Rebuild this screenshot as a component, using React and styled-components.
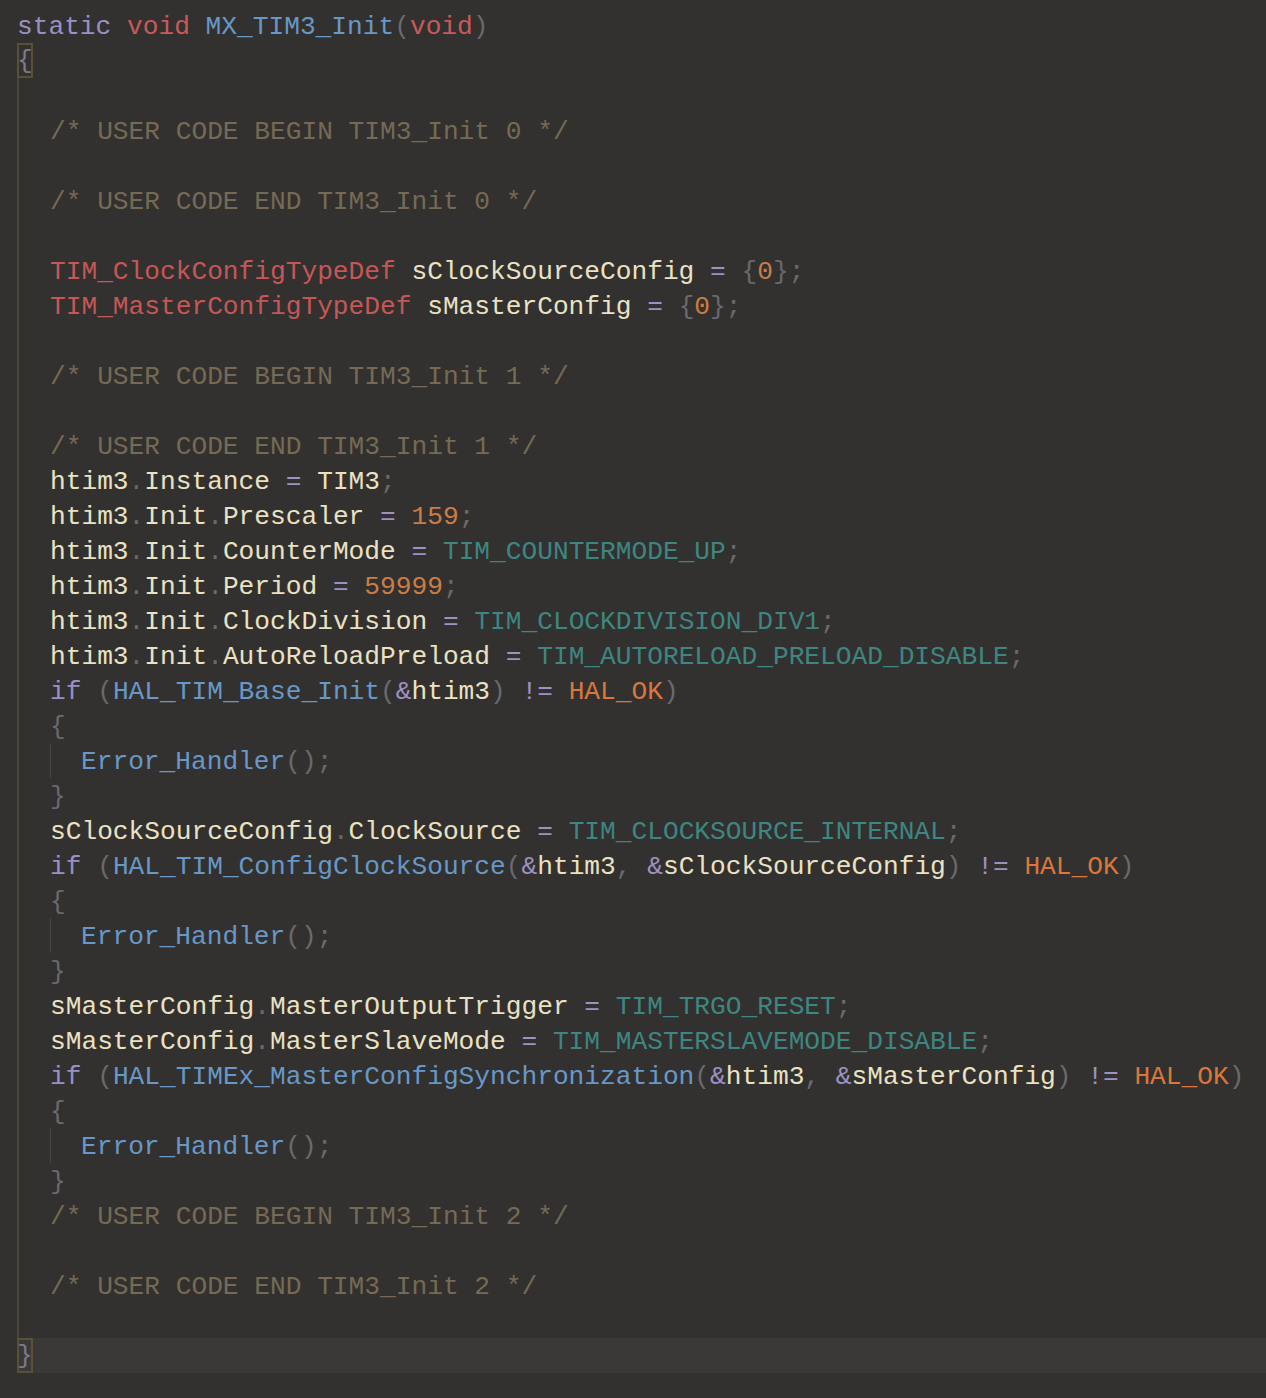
import React from 'react';
import styled, { createGlobalStyle } from 'styled-components';

const colors = {
  kw: '#9a90c4',
  vd: '#c75a5a',
  fn: '#6898c8',
  pn: '#6a696e',
  op: '#9e92c4',
  id: '#ebe1c3',
  ty: '#c65757',
  num: '#cc7c45',
  cst: '#3e8682',
  ok: '#dc763a',
  cm: '#766a54',
};

const GlobalStyle = createGlobalStyle`
  html, body {
    margin: 0;
    padding: 0;
    background: #32312f;
  }
`;

const Editor = styled.main`
  min-height: 100vh;
  box-sizing: border-box;
  padding: 7.5px 0 0 17px;
  overflow: hidden;
  background: #32312f;
  font-family: 'Liberation Mono', 'DejaVu Sans Mono', monospace;
  font-size: 26.2px;
  line-height: 35px;
  color: #ebe1c3;
`;

const Row = styled.div`
  box-sizing: border-box;
  height: 35px;
  padding-top: 2px;
  white-space: pre;
  background: ${(p) => (p.$current ? '#3a3937' : 'transparent')};
`;

// function body, with the indent guide of the outer braces
const Body = styled.div`
  border-left: 2px solid #4d4636;
  padding-left: 31px;
`;

// body of an if-block, thin guide
const Inner = styled.div`
  border-left: 1px solid #464542;
  padding-left: 30px;
`;

const Tok = styled.span`
  color: ${(p) => colors[p.$kind] || 'inherit'};
`;

const Match = styled.span`
  display: inline-block;
  vertical-align: top;
  height: 35px;
  margin-top: -2px;
  padding-top: 2px;
  box-sizing: border-box;
  line-height: 33px;
  box-shadow: inset 0 0 0 2px #5a5038;
  color: ${(p) => p.$color};
`;

const Line = ({ parts = [], current }) => (
  <Row $current={current}>
    {parts.length === 0 ? ' ' : null}
    {parts.map((p, i) =>
      typeof p === 'string' ? p : <Tok key={i} $kind={p[0]}>{p[1]}</Tok>
    )}
  </Row>
);

const comment = (s) => [['cm', s]];
const assign = (obj, fields, value) => {
  const out = [['id', obj]];
  fields.forEach((f) => out.push(['pn', '.'], ['id', f]));
  out.push(' ', ['op', '='], ' ', ...value, ['pn', ';']);
  return out;
};

const ErrorBlock = () => (
  <>
    <Line parts={[['pn', '{']]} />
    <Inner>
      <Line parts={[['fn', 'Error_Handler'], ['pn', '();']]} />
    </Inner>
    <Line parts={[['pn', '}']]} />
  </>
);

const ifCall = (fn, args) => {
  const out = [['kw', 'if'], ' ', ['pn', '('], ['fn', fn], ['pn', '(']];
  args.forEach((a, i) => {
    if (i > 0) out.push(['pn', ','], ' ');
    out.push(['op', '&'], ['id', a]);
  });
  out.push(['pn', ')'], ' ', ['op', '!='], ' ', ['ok', 'HAL_OK'], ['pn', ')']);
  return out;
};

export default function App() {
  return (
    <Editor>
      <GlobalStyle />
      <Line
        parts={[
          ['kw', 'static'], ' ', ['vd', 'void'], ' ', ['fn', 'MX_TIM3_Init'],
          ['pn', '('], ['vd', 'void'], ['pn', ')'],
        ]}
      />
      <Row>
        <Match $color="#7d7a8c">{'{'}</Match>
      </Row>
      <Body>
        <Line />
        <Line parts={comment('/* USER CODE BEGIN TIM3_Init 0 */')} />
        <Line />
        <Line parts={comment('/* USER CODE END TIM3_Init 0 */')} />
        <Line />
        <Line
          parts={[
            ['ty', 'TIM_ClockConfigTypeDef'], ' ', ['id', 'sClockSourceConfig'], ' ',
            ['op', '='], ' ', ['pn', '{'], ['num', '0'], ['pn', '};'],
          ]}
        />
        <Line
          parts={[
            ['ty', 'TIM_MasterConfigTypeDef'], ' ', ['id', 'sMasterConfig'], ' ',
            ['op', '='], ' ', ['pn', '{'], ['num', '0'], ['pn', '};'],
          ]}
        />
        <Line />
        <Line parts={comment('/* USER CODE BEGIN TIM3_Init 1 */')} />
        <Line />
        <Line parts={comment('/* USER CODE END TIM3_Init 1 */')} />
        <Line parts={assign('htim3', ['Instance'], [['id', 'TIM3']])} />
        <Line parts={assign('htim3', ['Init', 'Prescaler'], [['num', '159']])} />
        <Line parts={assign('htim3', ['Init', 'CounterMode'], [['cst', 'TIM_COUNTERMODE_UP']])} />
        <Line parts={assign('htim3', ['Init', 'Period'], [['num', '59999']])} />
        <Line parts={assign('htim3', ['Init', 'ClockDivision'], [['cst', 'TIM_CLOCKDIVISION_DIV1']])} />
        <Line
          parts={assign('htim3', ['Init', 'AutoReloadPreload'], [['cst', 'TIM_AUTORELOAD_PRELOAD_DISABLE']])}
        />
        <Line parts={ifCall('HAL_TIM_Base_Init', ['htim3'])} />
        <ErrorBlock />
        <Line
          parts={assign('sClockSourceConfig', ['ClockSource'], [['cst', 'TIM_CLOCKSOURCE_INTERNAL']])}
        />
        <Line parts={ifCall('HAL_TIM_ConfigClockSource', ['htim3', 'sClockSourceConfig'])} />
        <ErrorBlock />
        <Line parts={assign('sMasterConfig', ['MasterOutputTrigger'], [['cst', 'TIM_TRGO_RESET']])} />
        <Line
          parts={assign('sMasterConfig', ['MasterSlaveMode'], [['cst', 'TIM_MASTERSLAVEMODE_DISABLE']])}
        />
        <Line parts={ifCall('HAL_TIMEx_MasterConfigSynchronization', ['htim3', 'sMasterConfig'])} />
        <ErrorBlock />
        <Line parts={comment('/* USER CODE BEGIN TIM3_Init 2 */')} />
        <Line />
        <Line parts={comment('/* USER CODE END TIM3_Init 2 */')} />
        <Line />
      </Body>
      <Row $current>
        <Match $color="#7d7a8c">{'}'}</Match>
      </Row>
    </Editor>
  );
}
